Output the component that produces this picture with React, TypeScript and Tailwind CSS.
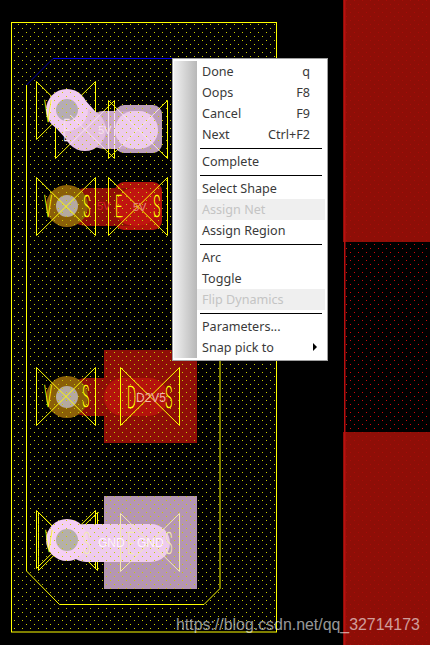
type MenuItem =
  | { kind: "sep" }
  | { kind: "item"; label: string; shortcut?: string; disabled?: boolean; submenu?: boolean };

const menuItems: MenuItem[] = [
  { kind: "item", label: "Done", shortcut: "q" },
  { kind: "item", label: "Oops", shortcut: "F8" },
  { kind: "item", label: "Cancel", shortcut: "F9" },
  { kind: "item", label: "Next", shortcut: "Ctrl+F2" },
  { kind: "sep" },
  { kind: "item", label: "Complete" },
  { kind: "sep" },
  { kind: "item", label: "Select Shape" },
  { kind: "item", label: "Assign Net", disabled: true },
  { kind: "item", label: "Assign Region" },
  { kind: "sep" },
  { kind: "item", label: "Arc" },
  { kind: "item", label: "Toggle" },
  { kind: "item", label: "Flip Dynamics", disabled: true },
  { kind: "sep" },
  { kind: "item", label: "Parameters..." },
  { kind: "item", label: "Snap pick to", submenu: true },
];

const YELLOW = "#ffff00";
const PALE = "#f8e2f0";

function Bowtie({ x, y, color = YELLOW }: { x: number; y: number; color?: string }) {
  // pin outline: two triangles meeting at the pin centre
  const r = x + 59;
  const b = y + 58;
  return <polygon points={`${x},${y} ${r},${b} ${r},${y} ${x},${b}`} fill="none" stroke={color} strokeWidth={1} />;
}

function Glyph({ x, y, ch, color = YELLOW }: { x: number; y: number; ch: string; color?: string }) {
  return (
    <text
      transform={`translate(${x} ${y}) scale(0.42 1)`}
      fontFamily="Inter, sans-serif"
      fontWeight={100}
      fontSize={30}
      fill={color}
      stroke={color}
      strokeWidth={0.7}
    >
      {ch}
    </text>
  );
}

function NetName({ x, y, size = 11, color, children }: { x: number; y: number; size?: number; color: string; children: string }) {
  return (
    <text x={x} y={y} fontFamily="Liberation Sans, sans-serif" fontSize={size} fill={color}>
      {children}
    </text>
  );
}

function Via({ y, ring, hole }: { y: number; ring: string; hole: string }) {
  return (
    <g>
      <circle cx={67} cy={y} r={21} fill={ring} />
      <circle cx={67} cy={y} r={11} fill={hole} />
    </g>
  );
}

function Board() {
  return (
    <svg width={430} height={645} viewBox="0 0 430 645" className="block">
      <defs>
        <pattern id="grid" width={8} height={8} patternUnits="userSpaceOnUse">
          <rect x={2} y={0} width={1} height={1} fill="#cccc00" shapeRendering="crispEdges" />
          <rect x={6} y={4} width={1} height={1} fill="#cccc00" shapeRendering="crispEdges" />
        </pattern>
        <pattern id="gridRed" width={8} height={8} patternUnits="userSpaceOnUse">
          <rect x={2} y={0} width={1} height={1} fill="#d00a0a" shapeRendering="crispEdges" />
          <rect x={6} y={4} width={1} height={1} fill="#d00a0a" shapeRendering="crispEdges" />
        </pattern>
        <clipPath id="selectedPads">
          <rect x={115} y={105} width={47} height={48} rx={9} />
          <rect x={85} y={111} width={73} height={38} rx={19} />
          <circle cx={85} cy={130} r={21} />
        </clipPath>
      </defs>

      {/* copper pour on the right */}
      <rect x={346} y={242} width={84} height={190} fill="url(#gridRed)" />
      <rect x={343} y={0} width={87} height={242} fill="#8e0e07" />
      <rect x={343} y={432} width={87} height={213} fill="#8e0e07" />
      <rect x={344} y={0} width={86} height={242} fill="url(#gridRed)" opacity={0.4} />
      <rect x={344} y={432} width={86} height={213} fill="url(#gridRed)" opacity={0.4} />
      <rect x={344} y={0} width={1.5} height={645} fill="#b81010" />

      {/* outlines that the selected pads cover */}
      <Bowtie x={36.5} y={81.5} />
      <Bowtie x={55.5} y={100.5} />
      <Bowtie x={108.5} y={100.5} />
      <Bowtie x={36.5} y={510.5} />
      <Bowtie x={38.5} y={512.5} />

      {/* pin 1, selected */}
      <rect x={115} y={105} width={47} height={48} rx={9} fill="#bc9eba" />
      <rect x={85} y={111} width={73} height={38} rx={19} fill="#c9a6c6" />
      <rect x={115} y={111} width={43} height={38} rx={19} fill="#edcbec" />
      <line x1={67} y1={110} x2={85} y2={130} stroke="#f0cbee" strokeWidth={40} strokeLinecap="round" />
      <circle cx={85} cy={130} r={21} fill="#e4bfe0" />
      <Via y={110} ring="#f2cdf0" hole="#b5acb4" />
      <g clipPath="url(#selectedPads)">
        <Bowtie x={55.5} y={100.5} color={PALE} />
        <Bowtie x={108.5} y={100.5} color={PALE} />
      </g>

      {/* pin 2 */}
      <rect x={115} y={182} width={47} height={48} rx={9} fill="#b0120a" />
      <rect x={67} y={188} width={91} height={38} rx={19} fill="#8e0e07" />
      <rect x={115} y={188} width={43} height={38} rx={19} fill="#c01510" />
      <Via y={206} ring="#8a5f08" hole="#b5a9a0" />

      {/* pin 3 */}
      <rect x={104} y={350} width={93} height={93} fill="#8e0e07" />
      <rect x={67} y={378} width={101} height={38} rx={19} fill="#8e0e07" />
      <rect x={104} y={378} width={64} height={38} rx={19} fill="#b4130c" />
      <Via y={397} ring="#8a5f08" hole="#b5a9a0" />

      {/* pin 4, selected */}
      <rect x={104} y={496} width={93} height={93} fill="#b596b2" />
      <rect x={67} y={524} width={103} height={38} rx={19} fill="#eecbee" />
      <Via y={540} ring="#f5cff4" hole="#b5b0a8" />

      {/* board outline */}
      <rect x={12} y={23} width={264} height={609} fill="url(#grid)" />
      <rect x={11.5} y={22.5} width={265} height={609.5} fill="none" stroke={YELLOW} strokeWidth={1} />
      <polyline points="26.5,85 26.5,571 59.5,604.5 204,604.5 220,588.5 220,360" fill="none" stroke={YELLOW} strokeWidth={1} />
      <line x1={26.5} y1={85} x2={53} y2={58.5} stroke="#0000a0" strokeWidth={1} />
      <line x1={53} y1={58.5} x2={175} y2={58.5} stroke="#0000e0" strokeWidth={1} />

      {/* pin outlines */}
      <Bowtie x={36.5} y={177.5} />
      <Bowtie x={108.5} y={177.5} />
      <Bowtie x={36.5} y={367.5} />
      <Bowtie x={120.5} y={367.5} />
      <Bowtie x={120.5} y={513.5} color="#f4e8b4" />

      {/* reference designators */}
      <Glyph x={44} y={122} ch="V" />
      <Glyph x={63} y={141} ch="E" color={PALE} />
      <Glyph x={44} y={217} ch="V" />
      <Glyph x={83} y={217} ch="S" />
      <Glyph x={115} y={217} ch="E" />
      <Glyph x={153} y={217} ch="S" />
      <Glyph x={44} y={407} ch="V" />
      <Glyph x={82} y={407} ch="S" />
      <Glyph x={127} y={408} ch="D" />
      <Glyph x={165} y={408} ch="S" />
      <Glyph x={45} y={552} ch="V" />
      <Glyph x={83} y={554} ch="S" color="#f4e8b4" />
      <Glyph x={127} y={554} ch="E" color="#f4e8b4" />
      <Glyph x={165} y={554} ch="S" color="#f4e8b4" />

      {/* net names */}
      <NetName x={97} y={210} color="#d8202a">5V</NetName>
      <NetName x={133} y={211} color="#e88a80">5V</NetName>
      <NetName x={98} y={134} color={PALE}>5V</NetName>
      <NetName x={136} y={402} size={12} color="#f0b0a8">D2V5</NetName>
      <NetName x={98} y={547} size={12} color="#fff4fc">GND</NetName>
      <NetName x={137} y={547} size={12} color="#fff4fc">GND</NetName>
    </svg>
  );
}

function ContextMenu() {
  return (
    <div className="absolute left-[172px] top-[58px] flex h-[303px] w-[156px] border border-[#a0a0a0] bg-white px-[1px] py-[2px] [font-family:'Noto_Sans',sans-serif] text-[12.6px] text-[#3a3a3a]">
      <div className="w-[23px] shrink-0 bg-gradient-to-r from-[#f0f0f0] to-[#b8b8b8]" />
      <div className="flex min-w-0 flex-1 flex-col pr-[1px]">
        {menuItems.map((item, i) =>
          item.kind === "sep" ? (
            <div key={i} className="flex h-[6px] items-center px-[3px]">
              <div className="h-px w-full bg-black" />
            </div>
          ) : (
            <div
              key={item.label}
              className={`relative flex h-[21px] items-center justify-between pl-[5px] pr-[15px] pt-[2px] leading-none ${
                item.disabled ? "bg-[#efefef] text-[#c4c4c4]" : ""
              }`}
            >
              <span>{item.label}</span>
              {item.shortcut && <span>{item.shortcut}</span>}
              {item.submenu && (
                <span className="absolute right-[8px] top-[6px] h-0 w-0 border-y-[4px] border-l-[4px] border-y-transparent border-l-black" />
              )}
            </div>
          ),
        )}
      </div>
    </div>
  );
}

export default function App() {
  return (
    <div className="relative h-[645px] w-[430px] overflow-hidden bg-black">
      <Board />
      <ContextMenu />
      <div className="absolute left-[176px] top-[616px] whitespace-nowrap text-[15.9px] leading-[18px] text-white/60 [font-family:'Liberation_Sans',sans-serif]">
        https://blog.csdn.net/qq_32714173
      </div>
    </div>
  );
}
